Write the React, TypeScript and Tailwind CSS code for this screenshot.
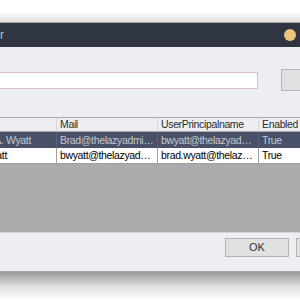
import React from 'react';

const rows = [
  { name: 'Brad A. Wyatt', mail: 'Brad@thelazyadmin.com', upn: 'bwyatt@thelazyadmin.com', enabled: 'True', selected: true },
  { name: 'bradwyatt', mail: 'bwyatt@thelazyadmin.com', upn: 'brad.wyatt@thelazyadmin.com', enabled: 'True', selected: false },
];

export default function App() {
  return (
    <div
      className="w-[300px] h-[300px] overflow-hidden bg-white flex flex-col"
      style={{ fontFamily: '"Liberation Sans", Arial, sans-serif' }}
    >
      {/* shadow above the window */}
      <div className="h-[22px] shrink-0 bg-gradient-to-b from-white via-white to-[#e0e0e0]" />

      {/* window */}
      <div className="shrink-0 border-t border-b border-[#a3a6ab] bg-[#eceef3] flex flex-col">
        {/* title bar */}
        <div className="h-[24px] bg-[#2f3541] flex items-center justify-between pr-[4px]">
          <div className="w-[4px] overflow-hidden flex justify-end">
            <span className="whitespace-nowrap text-[12px] text-[#b9bdc6]">AD User Finder</span>
          </div>
          <div className="w-[12px] h-[12px] rounded-full bg-[#ebc67c]" />
        </div>

        {/* search row */}
        <div className="mt-[22px] h-[22px] flex items-center">
          <div className="-ml-[4px] w-[262px] h-[17px] shrink-0 bg-white border border-[#d9bcd3]" />
          <div className="ml-[23px] w-[60px] h-[22px] shrink-0 bg-[#e1e1e1] border border-[#b4b4b4]" />
        </div>

        {/* grid */}
        <div className="mt-[26px] h-[115px] bg-[#ababab] flex flex-col text-[10.5px] tracking-[-0.35px]">
          <div className="h-[15px] flex border-t border-b border-[#a9abb0] bg-[#eceef3] text-[#2b2b2b] leading-[13px]">
            <div className="w-[57px] shrink-0 border-r border-[#d4d6da]" />
            <div className="w-[101px] shrink-0 px-[3px] border-r border-[#d4d6da]">Mail</div>
            <div className="w-[101px] shrink-0 px-[3px] border-r border-[#d4d6da]">UserPrincipalname</div>
            <div className="flex-1 px-[3px]">Enabled</div>
          </div>
          {rows.map((r) => (
            <div
              key={r.name}
              className={
                r.selected
                  ? 'h-[16px] flex bg-[#485167] text-[#c3c8d3] leading-[16px]'
                  : 'h-[16px] flex bg-white text-black leading-[15px] border-b border-[#a0a0a0]'
              }
            >
              <div className={r.selected ? 'w-[57px] shrink-0 overflow-hidden flex justify-end border-r border-[#5a6378]' : 'w-[57px] shrink-0 overflow-hidden flex justify-end border-r border-[#a0a0a0]'}>
                <span className={r.selected ? 'whitespace-nowrap pr-[25px]' : 'whitespace-nowrap pr-[49px]'}>{r.name}</span>
              </div>
              <div className={r.selected ? 'w-[101px] shrink-0 px-[3px] truncate border-r border-[#5a6378]' : 'w-[101px] shrink-0 px-[3px] truncate border-r border-[#a0a0a0]'}>{r.mail}</div>
              <div className={r.selected ? 'w-[101px] shrink-0 px-[3px] truncate border-r border-[#5a6378]' : 'w-[101px] shrink-0 px-[3px] truncate border-r border-[#a0a0a0]'}>{r.upn}</div>
              <div className="flex-1 px-[3px]">{r.enabled}</div>
            </div>
          ))}
        </div>

        {/* buttons */}
        <div className="h-[39px] border-t border-[#d2d4d8] flex items-start pt-[5px]">
          <div className="ml-[225px] w-[64px] h-[19px] shrink-0 bg-[#e1e1e1] border border-[#b4b4b4] flex items-center justify-center text-[11px] text-[#333]">
            OK
          </div>
          <div className="ml-[7px] w-[64px] h-[19px] shrink-0 bg-[#e1e1e1] border border-[#b4b4b4]" />
        </div>
      </div>

      {/* shadow below the window */}
      <div className="flex-1 bg-gradient-to-b from-[#9a9a9a] via-[#dedede] to-white" />
    </div>
  );
}
